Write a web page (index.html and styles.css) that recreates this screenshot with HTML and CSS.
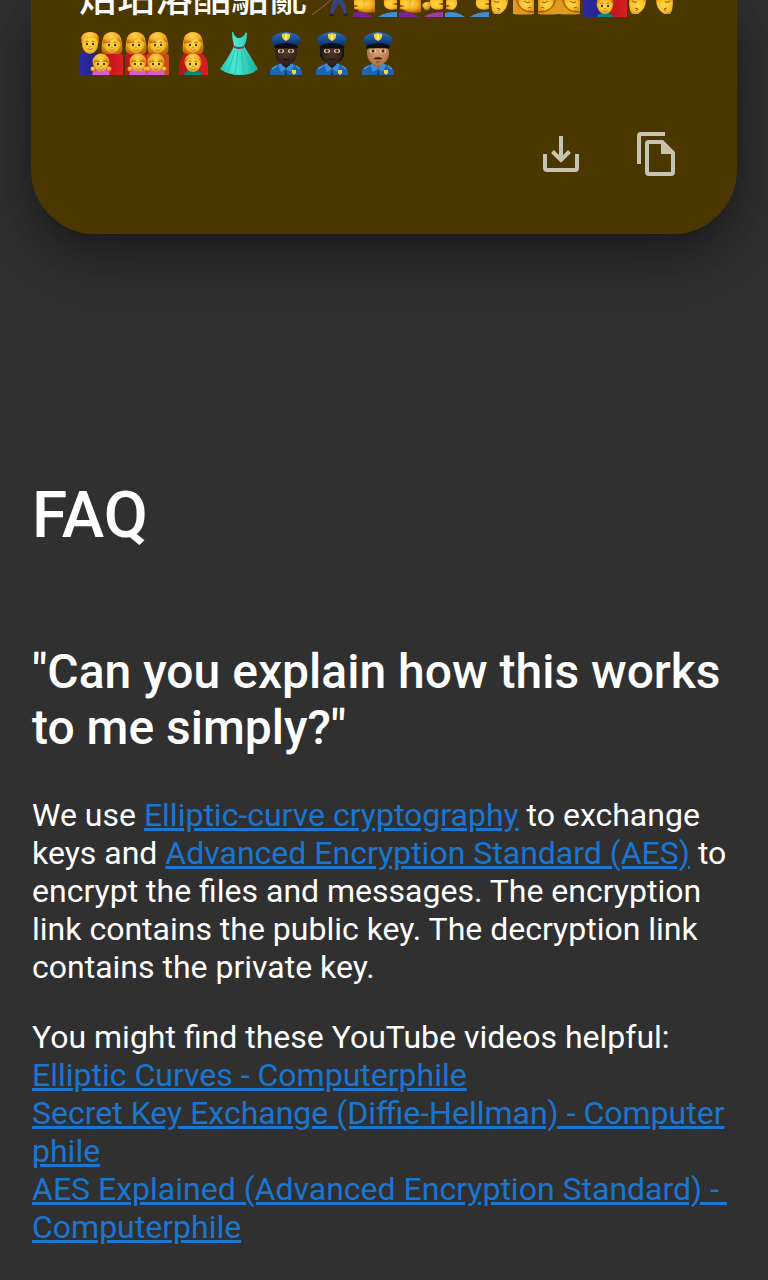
FILE: index.html
```html
<!DOCTYPE html>
<html lang="en">
<head>
<meta charset="utf-8">
<title>FAQ</title>
<meta name="viewport" content="width=device-width, initial-scale=1">
<link rel="stylesheet" href="styles.css">
</head>
<body>
<svg class="defs" width="0" height="0" aria-hidden="true">
  <defs>
    <radialGradient id="skin" cx=".5" cy=".4" r=".65"><stop offset="0" stop-color="#ffdb4a"/><stop offset=".7" stop-color="#f9bd26"/><stop offset="1" stop-color="#d98b0c"/></radialGradient>
    <radialGradient id="hair" cx=".45" cy=".3" r=".7"><stop offset="0" stop-color="#ffd45a"/><stop offset=".6" stop-color="#f2a91e"/><stop offset="1" stop-color="#b96a09"/></radialGradient>
    <radialGradient id="dark" cx=".5" cy=".45" r=".65"><stop offset="0" stop-color="#51392f"/><stop offset="1" stop-color="#2a1a17"/></radialGradient>
    <radialGradient id="tan" cx=".5" cy=".45" r=".65"><stop offset="0" stop-color="#dba26f"/><stop offset="1" stop-color="#a96c3e"/></radialGradient>
    <linearGradient id="cap" x1="0" x2="0" y1="0" y2="1"><stop offset="0" stop-color="#2a6fc0"/><stop offset="1" stop-color="#0c346f"/></linearGradient>
    <linearGradient id="dress" x1="0" x2="1" y1="0" y2="0"><stop offset="0" stop-color="#22c3ae"/><stop offset=".4" stop-color="#48ead4"/><stop offset="1" stop-color="#1bae9b"/></linearGradient>
    <linearGradient id="navy" x1="0" x2="1"><stop offset="0" stop-color="#2f2ba6"/><stop offset="1" stop-color="#23207e"/></linearGradient>
    <linearGradient id="red" x1="0" x2="1"><stop offset="0" stop-color="#b3131c"/><stop offset="1" stop-color="#dc1e22"/></linearGradient>

    <g id="features">
      <path d="M-4.500-2.500q1.500-1 3 0M1.500-2.500q1.500-1 3 0" fill="none" stroke="#9a5a08" stroke-width=".8"/>
      <ellipse cx="-3" cy="0" rx="1" ry="1.300" fill="#3b2208"/><ellipse cx="3" cy="0" rx="1" ry="1.300" fill="#3b2208"/>
      <path d="M-1 2.500q1 .8 2 0" fill="none" stroke="#c47a0a" stroke-width=".8"/>
      <path d="M-2.500 4.500q2.500 2 5 0" fill="#fff" stroke="#a34b12" stroke-width=".8"/>
    </g>
    <g id="man">
      <path d="M-9-1q-1-11 9-11t9 11z" fill="url(#hair)"/>
      <ellipse rx="8" ry="10" fill="url(#skin)"/>
      <path d="M-9-2q-1-9 9-10 10 1 9 10-2-4-5-4-7 1-9-1-2 1-4 5z" fill="url(#hair)"/>
      <use href="#features"/>
    </g>
    <g id="woman">
      <path d="M-10 8q-1-4 0-9 1-11 10-11t10 11q1 5 0 9-2 2-4 2H-6q-2 0-4-2z" fill="url(#hair)"/>
      <ellipse cy="0" rx="8" ry="9" fill="url(#skin)"/>
      <path d="M-9 0q-1-11 8-12 9 0 10 11-4-2-6-6-3 5-12 7z" fill="url(#hair)"/>
      <use href="#features" y="1"/>
    </g>
    <g id="girl">
      <circle cx="-8" cy="6" r="2.500" fill="url(#hair)"/><circle cx="8" cy="6" r="2.500" fill="url(#hair)"/>
      <ellipse cy="-1" rx="8.500" ry="8.500" fill="url(#hair)"/>
      <ellipse cy="1" rx="7" ry="7.500" fill="url(#skin)"/>
      <path d="M-7 0q0-7 7-8 7 1 7 8-5-2-7-5-2 3-7 5z" fill="url(#hair)"/>
      <use href="#features" y="1"/>
    </g>
    <g id="boy">
      <ellipse cy="-1" rx="8.500" ry="8.500" fill="url(#hair)"/>
      <ellipse cy="1" rx="7.500" ry="8" fill="url(#skin)"/>
      <path d="M-8-1q0-8 8-8t8 8q-3-4-8-3-5-1-8 3z" fill="url(#hair)"/>
      <use href="#features" y="1"/>
    </g>
    <g id="uniform">
      <path d="M7 44q-1-8 6-10l6-2h8l6 2q6 2 6 10z" fill="#1e65b0"/>
      <path d="M18 32l5 6 5-6 3 2-3 7-5-3-5 3-3-7z" fill="#3d8bd6"/>
      <path d="M23 38l-1 6h2z" fill="#0d2d55"/>
      <path d="M29 39h4v3l-2 2-2-2z" fill="#f6d743"/>
      <path d="M9 38l5-3M37 38l-4-3" stroke="#6fa9e0"/>
    </g>
    <g id="police-cap">
      <path d="M12 13q11-5 22 0v5q-11-4-22 0z" fill="#111b28"/>
      <path d="M8 9Q9 4 17 2q6-2 12 0 8 2 9 7-1 4-4 5-11-5-22 0-3-1-4-5z" fill="url(#cap)"/>
      <path d="M10 16q13-7 26 0-4 2-13 1-9 1-13-1z" fill="#090f19"/>
      <path d="M19 3l4-1 4 1q1 5-4 7-5-2-4-7z" fill="#f5cf37"/><path d="M23 4v4" stroke="#fff39a" stroke-width="2"/>
    </g>
    <g id="officer-eyes">
      <ellipse cx="18" cy="20" rx="3" ry="2" fill="#e9dcc8"/><ellipse cx="28" cy="20" rx="3" ry="2" fill="#e9dcc8"/>
      <circle cx="18" cy="20" r="1.700" fill="#5b3108"/><circle cx="28" cy="20" r="1.700" fill="#5b3108"/>
    </g>
    <!-- lower half of two people leaning together -->
    <g id="face-left"><path d="M1 0h11q1 8-5 10l-6-1z" fill="url(#skin)"/><path d="M1 5l5 1-5 1z" fill="#8b3c16"/></g>
    <g id="long-hair"><path d="M5 0h17v12q-9 2-17-1 4-4 3-11z" fill="url(#hair)"/></g>
    <g id="face-right"><path d="M31 0h13v9q-7 2-11-1-3-3-2-8z" fill="url(#skin)"/><path d="M44 3l-5 1 5 1z" fill="#8b3c16"/></g>
    <g id="kiss-left"><path d="M0 0h17q0 9-8 14H3Q0 11 0 0z" fill="url(#skin)"/><path d="M3 1q2 2 5 1M6 8l3 1-2 2" fill="none" stroke="#96560e"/></g>
    <g id="kiss-right"><path d="M27 0h17q0 11-3 14h-6q-8-5-8-14z" fill="url(#skin)"/><path d="M41 1q-2 2-5 1M38 8l-3 1 2 2" fill="none" stroke="#96560e"/></g>
    <g id="kiss-hair"><path d="M1 0h21v14q-10 1-21 0z" fill="#e09a1c"/><path d="M1 12q14 0 17-12" fill="none" stroke="#a4600c" stroke-width="2"/><path d="M2 0h15q-1 8-9 11-6 0-6-11z" fill="url(#skin)"/><path d="M5 2q3 2 6-1M4 7l3 1" fill="none" stroke="#96560e"/></g>
  </defs>
</svg>

<main class="page">
  <section class="card">
    <div class="message">
      <div class="line">
        <span class="cjk">焙玷溶酷駘亂</span>
        <svg class="emoji" viewBox="0 0 46 17" role="img" aria-label="Person with white cane"><path d="M5 15L24 0" stroke="#98645a"/><path d="M26 0h10l3 6 1 8-3 1-2-8-4-4-2 5-3 6-3-1z" fill="#344583"/><path d="M23 13l5 2-1 1h-5zM36 14l5-1v2l-4 2z" fill="#23242e"/></svg>
        <svg class="emoji" viewBox="0 0 46 17" role="img" aria-label="Woman and man"><use href="#long-hair"/><path d="M0 17v-4q10-3 20 4z" fill="#7a2196"/><path d="M25 17q6-5 19-5v5z" fill="#408cd2"/><use href="#face-left"/><use href="#face-right"/></svg>
        <svg class="emoji" viewBox="0 0 46 17" role="img" aria-label="Two women"><use href="#long-hair"/><path d="M0 17v-4q10-3 20 4z" fill="#7a2196"/><path d="M25 17q6-5 19-5v5z" fill="#a33b9f"/><path d="M23 5q3-4 8-3v7q-5 4-8-4z" fill="url(#hair)"/><use href="#face-left"/><use href="#face-right"/></svg>
        <svg class="emoji" viewBox="0 0 46 17" role="img" aria-label="Two men"><path d="M0 17v-4q10-3 20 4zM25 17q6-5 19-5v5z" fill="#408cd2"/><use href="#face-left"/><use href="#face-right"/></svg>
        <svg class="emoji" viewBox="0 0 46 17" role="img" aria-label="Kiss, man and woman"><use href="#kiss-left"/><use href="#kiss-hair" transform="translate(44) scale(-1 1)"/></svg>
        <svg class="emoji" viewBox="0 0 46 17" role="img" aria-label="Kiss, women"><use href="#kiss-hair"/><use href="#kiss-hair" transform="translate(44) scale(-1 1)"/></svg>
        <svg class="emoji" viewBox="0 0 46 17" role="img" aria-label="Family with boy"><path d="M0 0h22v17H0z" fill="url(#navy)"/><path d="M22 0h22v17H22z" fill="url(#red)"/><path d="M14 17q0-4 8-4t8 4z" fill="#07877a"/><use href="#boy" x="22" y="5"/></svg>
        <svg class="emoji" viewBox="0 0 46 17" role="img" aria-label="Kiss, men"><use href="#kiss-left"/><use href="#kiss-right"/></svg>
      </div>
      <div class="line">
        <svg class="emoji" viewBox="0 0 46 44" role="img" aria-label="Family: man, woman, girl"><path d="M0 44V24q4-4 10-4t12 4v20z" fill="url(#navy)"/><path d="M22 44V23q5-3 11-3t11 4v20z" fill="url(#red)"/><use href="#man" x="11" y="13"/><use href="#woman" x="33" y="13"/><path d="M13 44q1-7 9-7t9 7z" fill="#d65bd5"/><use href="#girl" x="22" y="32"/></svg>
        <svg class="emoji" viewBox="0 0 46 44" role="img" aria-label="Family: two women, two girls"><path d="M0 44V24q4-4 10-4t12 4v20z" fill="url(#red)"/><path d="M22 44V23q5-3 11-3t11 4v20z" fill="#c94b12"/><use href="#woman" x="11" y="13"/><use href="#woman" x="33" y="13"/><path d="M4 44q1-7 9-7t9 7q1-7 9-7t9 7z" fill="#d65bd5"/><use href="#girl" x="13" y="32"/><use href="#girl" x="31" y="32"/></svg>
        <svg class="emoji" viewBox="0 0 46 44" role="img" aria-label="Family: woman, boy"><path d="M8 44q-1-18 7-22h15q8 4 7 22z" fill="url(#red)"/><use href="#woman" x="22" y="13"/><path d="M13 44q1-6 9-6t9 6z" fill="#07877a"/><use href="#boy" x="22" y="32"/></svg>
        <svg class="emoji" viewBox="0 0 46 44" role="img" aria-label="Dress"><path d="M16 1q2 6 6 6t7-6l1 1q0 8-3 13 7 11 14 23-6 6-18 6T3 38q9-12 14-23-2-7-2-14z" fill="url(#dress)"/><path d="M17 15q5 2 10 0v2q-5 2-10 0z" fill="#8d315b"/><path d="M18 19L11 41M21 19l-3 24M24 19l3 23M26 18l9 21" stroke="#20b5a3" stroke-width=".7" fill="none"/></svg>
        <svg class="emoji" viewBox="0 0 46 44" role="img" aria-label="Police officer, man, dark skin"><use href="#uniform"/><path d="M19 29h8v5l-4 3-4-3z" fill="#2a1a17"/><ellipse cx="23" cy="22" rx="11" ry="12" fill="url(#dark)"/><use href="#officer-eyes"/><path d="M20 28q3 2 6 0" stroke="#160b09" fill="none"/><use href="#police-cap"/></svg>
        <svg class="emoji" viewBox="0 0 46 44" role="img" aria-label="Police officer, dark skin"><path d="M11 15h24v10q-3 6-6 6H17q-6-3-6-8z" fill="#171416"/><use href="#uniform"/><path d="M19 29h8v5l-4 3-4-3z" fill="#2a1a17"/><ellipse cx="23" cy="22" rx="10" ry="12" fill="url(#dark)"/><use href="#officer-eyes"/><path d="M20 28q3 2 6 0" stroke="#160b09" fill="none"/><use href="#police-cap"/></svg>
        <svg class="emoji" viewBox="0 0 46 44" role="img" aria-label="Police officer, man, medium skin"><use href="#uniform"/><path d="M19 29h8v5l-4 3-4-3z" fill="#a96c3e"/><ellipse cx="23" cy="22" rx="11" ry="12" fill="url(#tan)"/><use href="#officer-eyes"/><path d="M18 28q5-4 10 0-5 1-10 0z" fill="#472513"/><path d="M21 31h4" stroke="#7a3c20"/><use href="#police-cap"/></svg>
      </div>
    </div>
    <div class="actions">
      <button class="action" type="button" aria-label="Download"><svg viewBox="0 0 48 48"><path d="M24 6v24M15.500 21.500L24 30l8.500-8.500M8 24v14a2 2 0 0 0 2 2h28a2 2 0 0 0 2-2V24" fill="none" stroke="currentColor" stroke-width="4"/></svg></button>
      <button class="action" type="button" aria-label="Copy"><svg viewBox="0 0 48 48"><path d="M32 2H8a4 4 0 0 0-4 4v28h4V6h24zM30 10H16a4 4 0 0 0-4 4v28a4 4 0 0 0 4 4h22a4 4 0 0 0 4-4V22zM16 42V14h12v10h10v18z" fill="currentColor" fill-rule="evenodd"/></svg></button>
    </div>
  </section>

  <section class="faq">
    <h2 class="title">FAQ</h2>
    <h3 class="question">"Can you explain how this works to me simply?"</h3>
    <p class="answer">We use <a href="#ecc">Elliptic-curve cryptography</a> to exchange keys and <a href="#aes">Advanced Encryption Standard (AES)</a> to encrypt the files and messages. The encryption link contains the public key. The decryption link contains the private key.</p>
    <p class="answer">You might find these YouTube videos helpful:<br><a class="video" href="#v1">Elliptic Curves - Computerphile</a><br><a class="video" href="#v2">Secret Key Exchange (Diffie-Hellman) - Computerphile</a><br><a class="video" href="#v3">AES Explained (Advanced Encryption Standard) - Computerphile</a></p>
  </section>
</main>
</body>
</html>
```
FILE: styles.css
```css
* {
  box-sizing: border-box;
}

body {
  margin: 0;
  background: #303030;
  color: #fff;
  font-family: Roboto, "Noto Sans CJK TC", sans-serif;
  font-size: 32px;
  line-height: 38px;
}

.defs {
  position: absolute;
}

.page {
  display: flex;
  flex-direction: column;
  overflow: hidden;
}

.card {
  margin: 0 31px;
  padding: 0 32px 32px 48px;
  background: #4b3700;
  border-radius: 0 0 64px 64px;
  box-shadow:
    0 16px 32px -8px rgba(0, 0, 0, 0.35),
    0 24px 76px 6px rgba(0, 0, 0, 0.25);
}

.message {
  display: flex;
  flex-direction: column;
  gap: 14px;
}

.line {
  display: flex;
  align-items: flex-end;
}

.line:first-child {
  height: 17px;
}

.cjk {
  font-family: "Noto Sans CJK TC", sans-serif;
  font-size: 38px;
  line-height: 44px;
  font-weight: 500;
}

.emoji {
  flex: none;
  display: block;
  width: 46px;
}

.actions {
  display: flex;
  justify-content: flex-end;
  margin-top: 31px;
}

.action {
  width: 96px;
  height: 96px;
  padding: 24px;
  border: 0;
  background: none;
  color: #c9c3b3;
  cursor: pointer;
}

.action svg {
  display: block;
  width: 48px;
  height: 48px;
}

.faq {
  padding: 244px 32px 34px;
}

.title {
  margin: 0 0 90px;
  font-size: 64px;
  line-height: 76px;
  font-weight: 500;
}

.question {
  margin: 0 0 40px;
  font-size: 48px;
  line-height: 56px;
  font-weight: 500;
}

.answer {
  margin: 0 0 32px;
}

.answer:last-child {
  margin-bottom: 0;
}

.answer a {
  color: #1976d2;
}

.video {
  word-break: break-all;
  white-space: break-spaces;
}
```
